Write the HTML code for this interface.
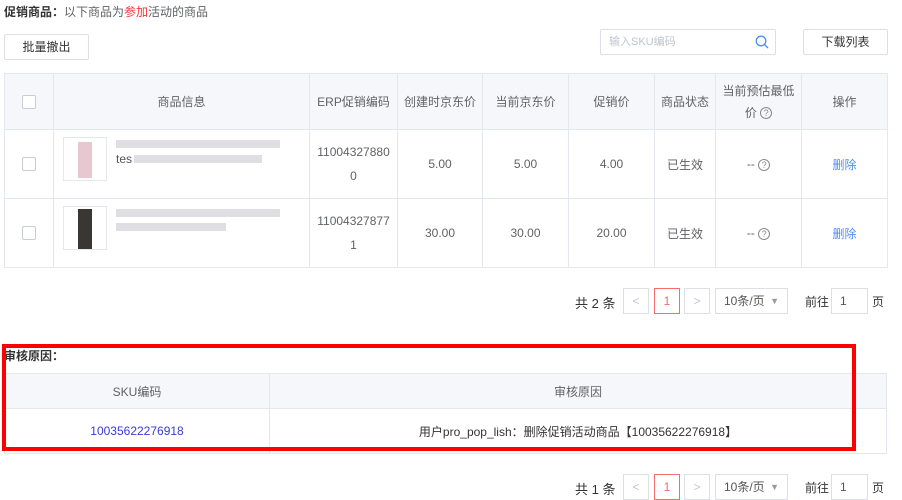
<!DOCTYPE html>
<html><head><meta charset="utf-8"><style>
*{box-sizing:border-box;margin:0;padding:0}
body{width:902px;height:498px;background:#fff;font-family:"Liberation Sans","Noto Sans CJK SC",sans-serif;font-size:12px;color:#606266;position:relative;overflow:hidden}
.a{position:absolute}
.btn{position:absolute;border:1px solid #dcdfe6;border-radius:2px;background:#fff;text-align:center;color:#333;font-size:12px}
table{border-collapse:collapse;position:absolute;table-layout:fixed}
td{border:1px solid #e4e7ed;text-align:center;font-size:12px;color:#606266}
thead td{background:#f5f7fa}
.cb{display:inline-block;width:14px;height:14px;border:1px solid #c8ccd4;border-radius:2px;background:#fff;vertical-align:middle}
.q{display:inline-block;width:12px;height:12px;border:1px solid #888;border-radius:50%;font-size:9px;line-height:10px;text-align:center;color:#888;vertical-align:middle}
.pb{position:absolute;border:1px solid #dcdfe6;height:26px;line-height:24px;text-align:center;color:#c0c4cc;font-size:12px;background:#fff}
.blur{position:absolute;height:8px;background:#d6d6dc;opacity:.8}
</style></head><body>
<div class="a" style="left:4px;top:3px;font-size:12px;color:#606266"><b style="color:#333">促销商品：</b>以下商品为<span style="color:#f33">参加</span>活动的商品</div>
<div class="btn" style="left:4px;top:34px;width:85px;height:26px;line-height:24px">批量撤出</div>
<div class="a" style="left:600px;top:29px;width:176px;height:26px;border:1px solid #dcdfe6;border-radius:2px;color:#c0c4cc;line-height:24px;padding-left:8px;font-size:11px">输入SKU编码
<svg style="position:absolute;right:6px;top:5px" width="14" height="14" viewBox="0 0 14 14"><circle cx="6" cy="6" r="4.8" fill="none" stroke="#4d8ef7" stroke-width="1.3"/><path d="M9.5 9.5L13 13" stroke="#4d8ef7" stroke-width="1.3"/></svg></div>
<div class="btn" style="left:803px;top:29px;width:85px;height:26px;line-height:24px">下载列表</div>

<table style="left:4px;top:73px;width:883px">
<colgroup><col style="width:49px"><col style="width:256px"><col style="width:88px"><col style="width:85px"><col style="width:86px"><col style="width:86px"><col style="width:61px"><col style="width:86px"><col style="width:86px"></colgroup>
<thead><tr style="height:56px"><td><span class="cb"></span></td><td>商品信息</td><td>ERP促销编码</td><td>创建时京东价</td><td>当前京东价</td><td>促销价</td><td>商品状态</td><td style="line-height:22px">当前预估最低<br>价 <span class="q">?</span></td><td>操作</td></tr></thead>
<tr style="height:69px"><td><span class="cb"></span></td><td style="position:relative;text-align:left"><div class="a" style="left:9px;top:7px;width:44px;height:44px;border:1px solid #e4e7ed"><div class="a" style="left:14px;top:4px;width:14px;height:36px;background:#e8c8d0"></div></div><div class="blur" style="left:62px;top:10px;width:164px"></div><div class="a" style="left:62px;top:22px;color:#555">tes</div><div class="blur" style="left:80px;top:25px;width:128px"></div></td><td style="line-height:24px">11004327880<br>0</td><td>5.00</td><td>5.00</td><td>4.00</td><td>已生效</td><td>-- <span class="q">?</span></td><td style="color:#4d8ef7">删除</td></tr>
<tr style="height:69px"><td><span class="cb"></span></td><td style="position:relative;text-align:left"><div class="a" style="left:9px;top:7px;width:44px;height:44px;border:1px solid #e4e7ed"><div class="a" style="left:14px;top:2px;width:14px;height:40px;background:#3a3634"></div></div><div class="blur" style="left:62px;top:10px;width:164px"></div><div class="blur" style="left:62px;top:24px;width:110px"></div></td><td style="line-height:24px">11004327877<br>1</td><td>30.00</td><td>30.00</td><td>20.00</td><td>已生效</td><td>-- <span class="q">?</span></td><td style="color:#4d8ef7">删除</td></tr>
</table>

<div class="a" style="left:575px;top:293px;color:#333;font-size:13px">共 2 条</div>
<div class="pb" style="left:623px;top:288px;width:26px">&lt;</div>
<div class="pb" style="left:654px;top:288px;width:26px;border-color:#f56c6c;color:#f56c6c">1</div>
<div class="pb" style="left:684px;top:288px;width:26px">&gt;</div>
<div class="pb" style="left:715px;top:288px;width:73px;text-align:left;padding-left:8px;color:#555">10条/页<span style="position:absolute;right:8px;color:#999;font-size:9px">▼</span></div>
<div class="a" style="left:805px;top:293px;color:#333">前往</div>
<div class="pb" style="left:831px;top:288px;width:37px;text-align:left;padding-left:8px;color:#555">1</div>
<div class="a" style="left:872px;top:293px;color:#333">页</div>

<div class="a" style="left:4px;top:347px;font-weight:bold;color:#333">审核原因：</div>
<table style="left:4px;top:373px;width:883px">
<colgroup><col style="width:265px"><col></colgroup>
<thead><tr style="height:35px"><td>SKU编码</td><td>审核原因</td></tr></thead>
<tr style="height:45px"><td style="color:#3a3ad8">10035622276918</td><td style="color:#333">用户pro_pop_lish：删除促销活动商品【10035622276918】</td></tr>
</table>
<div class="a" style="left:2px;top:344px;width:854px;height:107px;border:4px solid #f00"></div>

<div class="a" style="left:575px;top:479px;color:#333;font-size:13px">共 1 条</div>
<div class="pb" style="left:623px;top:474px;width:26px">&lt;</div>
<div class="pb" style="left:654px;top:474px;width:26px;border-color:#f56c6c;color:#f56c6c">1</div>
<div class="pb" style="left:684px;top:474px;width:26px">&gt;</div>
<div class="pb" style="left:715px;top:474px;width:73px;text-align:left;padding-left:8px;color:#555">10条/页<span style="position:absolute;right:8px;color:#999;font-size:9px">▼</span></div>
<div class="a" style="left:805px;top:479px;color:#333">前往</div>
<div class="pb" style="left:831px;top:474px;width:37px;text-align:left;padding-left:8px;color:#555">1</div>
<div class="a" style="left:872px;top:479px;color:#333">页</div>
</body></html>
